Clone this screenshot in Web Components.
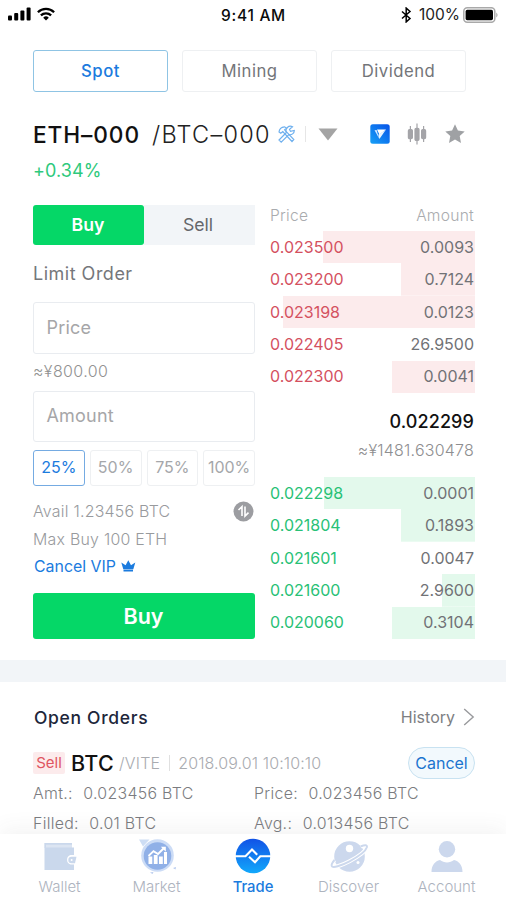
<!DOCTYPE html>
<html lang="en">
<head>
<meta charset="utf-8">
<meta name="viewport" content="width=device-width, initial-scale=1">
<title>Trade</title>
<style>
  html, body {
    margin: 0;
    height: 100%;
    overflow: hidden;
    background: #fff;
    font-family: Inter, "Liberation Sans", sans-serif;
  }
</style>
</head>
<body>
<trade-app></trade-app>

<script>
/**
 * Base class: renders styles() and template() into an open shadow root
 */
class BaseElement extends HTMLElement {
  constructor() {
    super();
    this.attachShadow({ mode: 'open' });
  }

  connectedCallback() {
    this.render();
  }

  render() {
    this.shadowRoot.innerHTML = `
      <style>
        * { box-sizing: border-box; }
        :host { display: block; box-sizing: border-box; white-space: nowrap; }
        svg { display: block; flex: none; }
        ${this.styles()}
      </style>
      ${this.template()}
    `;
  }

  styles() { return ''; }
  template() { return '<slot></slot>'; }
}

class StatusBar extends BaseElement {
  styles() {
    return `
      :host {
        display: grid;
        grid-template-columns: 1fr auto 1fr;
        align-items: center;
        height: 30px;
        padding: 0 7px 0 8px;
        font-size: 15.5px;
        font-weight: 500;
        letter-spacing: 0.7px;
        color: #0b0b0b;
      }
      .left, .right { display: flex; align-items: center; }
      .left { gap: 6px; padding-bottom: 2px; }
      .right { justify-content: flex-end; padding-bottom: 1px; }
      .level { font-weight: 400; margin: 0 3px 0 7px; color: #222; letter-spacing: 0; }
    `;
  }

  template() {
    return `
      <div class="left">
        <svg width="23" height="14" viewBox="0 0 23 14">
          <rect x="0" y="8.5" width="4" height="5" rx="1"/>
          <rect x="6.2" y="6" width="4" height="7.5" rx="1"/>
          <rect x="12.4" y="3.5" width="4" height="10" rx="1"/>
          <rect x="18.6" y="0.5" width="4" height="13" rx="1"/>
        </svg>
        <svg width="18" height="14" viewBox="0 0 18 14" fill="none" stroke="#000" stroke-width="2.3">
          <path d="M0.9 5.2a11.6 11.6 0 0 1 16.2 0M3.9 8.4a7.3 7.3 0 0 1 10.2 0"/>
          <path d="M9 13.6l-2.8-2.9a4 4 0 0 1 5.6 0z" fill="#000" stroke="none"/>
        </svg>
      </div>
      <span>9:41 AM</span>
      <div class="right">
        <svg width="11" height="16" viewBox="0 0 11 16" fill="none" stroke="#000" stroke-width="1.5">
          <path d="M1 4.5l8 7-3.8 3.4V1.1L9 4.5l-8 7"/>
        </svg>
        <span class="level">100%</span>
        <svg width="36" height="16" viewBox="0 0 36 16">
          <rect x="0.8" y="0.8" width="31" height="14.4" rx="3.5" fill="#fff" stroke="#a9a9a9" stroke-width="1.5"/>
          <rect x="2.6" y="2.8" width="27.4" height="10.4" rx="1.6"/>
          <path d="M33.4 5.5q2.2 2.5 0 5z" fill="#999"/>
        </svg>
      </div>
    `;
  }
}

/** Outlined choice box, add the active attribute for the blue state */
class OptionBox extends BaseElement {
  styles() {
    return `
      :host {
        display: flex;
        align-items: center;
        justify-content: center;
        border: 1.5px solid #eef0f2;
        border-radius: 3px;
        color: var(--option-color, #737579);
      }
      :host([active]) {
        border-color: var(--option-border, #8fc4e4);
        color: #1b7bde;
        font-weight: var(--option-weight, 500);
      }
    `;
  }
}

class ModeTabs extends BaseElement {
  styles() {
    return `
      :host {
        display: grid;
        grid-template-columns: repeat(3, 135px);
        gap: 14px;
        height: 42px;
        margin: 20px 33px 0;
        font-size: 16.7px;
        letter-spacing: 0.5px;
      }
    `;
  }

  template() {
    return `
      <option-box active>Spot</option-box>
      <option-box>Mining</option-box>
      <option-box>Dividend</option-box>
    `;
  }
}

class PairHeader extends BaseElement {
  styles() {
    return `
      :host { padding: 27px 40px 0 33px; }
      .row { display: flex; align-items: center; height: 30px; }
      .base { font-size: 22.7px; font-weight: 500; color: #111; letter-spacing: 0.9px; width: 119px; }
      .quote { font-size: 23.5px; font-weight: 300; color: #222; letter-spacing: 1.25px; width: 125px; }
      .sep { width: 1px; height: 16px; background: #e6e6e6; margin: 0 12px 0 9px; }
      .actions { display: flex; align-items: center; gap: 17px; margin-left: auto; }
      .change { height: 24px; line-height: 24px; margin-top: 10px; font-size: 18px; color: #2ec97c; letter-spacing: 0.1px; }
    `;
  }

  template() {
    return `
      <div class="row">
        <span class="base">ETH–000</span>
        <span class="quote">/BTC–000</span>
        <svg width="19" height="19" viewBox="0 0 19 19" fill="none" stroke="#6fb0ee" stroke-width="1.2">
          <path d="M2 7Q2.500 2.200 7.500 1.800L9.500 3 7.600 4.800 16.800 14.500 15 16.500 5.800 6.600 3.800 8.300z"/>
          <path d="M15.500 1.800l-3 2.600 1 2 3.800-1A4.300 4.300 0 0 1 11.800 9.600L4.200 17.200 2 15 9.400 7.500A4.400 4.400 0 0 1 15.500 1.800z"/>
        </svg>
        <span class="sep"></span>
        <svg width="20" height="13" viewBox="0 0 20 13"><path d="M0.5 0.5h19L10 12.5z" fill="#a4a4a4"/></svg>
        <div class="actions">
          <svg width="20" height="20" viewBox="0 0 20 20">
            <defs>
              <linearGradient id="badge" x1="1" y1="0" x2="0" y2="1">
                <stop offset="0" stop-color="#0753e8"/>
                <stop offset="1" stop-color="#16a0f6"/>
              </linearGradient>
            </defs>
            <rect x="0.3" y="0.3" width="19.4" height="19.4" rx="2.5" fill="url(#badge)"/>
            <path d="M7 5.600H16L9.400 10.400z" fill="#fff"/>
            <path d="M16 5.600L9.400 15 8.300 10.800z" fill="#eaf4ff"/>
            <path d="M4.500 6.300L6.600 5.900 9.400 15z" fill="#d4eaff"/>
          </svg>
          <svg width="20" height="22" viewBox="0 0 20 22" fill="#a4a4a8" stroke="#a4a4a8" stroke-width="1.2">
            <path d="M3.4 3v16M10 0.5v21M16.6 3v16" fill="none"/>
            <rect x="1.4" y="6.6" width="4" height="9" rx="1.2"/>
            <rect x="8" y="5.4" width="4" height="12" rx="1.2"/>
            <rect x="14.6" y="6.6" width="4" height="9" rx="1.2"/>
          </svg>
          <svg width="22" height="22" viewBox="0 0 22 22"><path d="M11 1.3l2.9 6.3 6.8.8-5 4.7 1.3 6.9-6-3.4-6 3.4 1.3-6.9-5-4.7 6.8-.8z" fill="#9fa1a4"/></svg>
        </div>
      </div>
      <div class="change">+0.34%</div>
    `;
  }
}

class InputBox extends BaseElement {
  styles() {
    return `
      :host {
        display: flex;
        align-items: center;
        padding: 0 0 2px 12.5px;
        border: 1.5px solid #e9ecf0;
        border-radius: 3px;
        font-size: 18px;
        color: #a6a6a8;
        letter-spacing: 0.2px;
      }
    `;
  }
}

class TradeForm extends BaseElement {
  styles() {
    return `
      :host { width: 222px; }
      .sides { display: grid; grid-template-columns: 1fr 1fr; height: 40px; font-size: 17.7px; line-height: 40px; text-align: center; }
      .buy { background: #05d767; color: #fff; font-weight: 600; border-radius: 3px; padding-right: 1px; }
      .sell { background: #f2f5f8; color: #65676b; padding-right: 3px; }
      .type { height: 57px; line-height: 57px; font-size: 18px; color: #75777b; letter-spacing: 0.5px; }
      .price { height: 52px; }
      .approx { height: 37px; line-height: 35px; font-size: 16px; font-weight: 300; color: #929292; letter-spacing: 0.4px; }
      .amount { height: 51px; }
      .percents {
        display: grid;
        grid-template-columns: repeat(4, 1fr);
        gap: 5px;
        height: 36px;
        margin: 8px 0 12px;
        font-size: 16px;
        --option-color: #a5a7aa;
        --option-border: #75abe2;
        --option-weight: 400;
      }
      .percents option-box { padding-bottom: 2px; }
      .line { display: flex; align-items: center; justify-content: space-between; height: 27.4px; font-size: 15.9px; color: #989a9d; font-weight: 300; letter-spacing: 0.25px; }
      .line svg { margin-right: 1px; }
      .vip { justify-content: flex-start; gap: 5px; padding-left: 1px; color: #1b7bde; font-weight: 400; letter-spacing: 0; }
      .submit { height: 46px; line-height: 46px; margin-top: 12.4px; text-align: center; font-size: 21.5px; font-weight: 600; color: #fff; background: #05d767; border-radius: 3px; padding-right: 1px; }
    `;
  }

  template() {
    return `
      <div class="sides"><div class="buy">Buy</div><div class="sell">Sell</div></div>
      <div class="type">Limit Order</div>
      <input-box class="price">Price</input-box>
      <div class="approx">≈¥800.00</div>
      <input-box class="amount">Amount</input-box>
      <div class="percents">
        <option-box active>25%</option-box>
        <option-box>50%</option-box>
        <option-box>75%</option-box>
        <option-box>100%</option-box>
      </div>
      <div class="line">
        <span>Avail 1.23456 BTC</span>
        <svg width="21" height="21" viewBox="0 0 21 21">
          <circle cx="10.5" cy="10.5" r="10" fill="#9c9da1"/>
          <path d="M5.5 9L9 5.6V15M12 5.6V15l3.5-3.4" fill="none" stroke="#fff" stroke-width="1.6"/>
        </svg>
      </div>
      <div class="line"><span>Max Buy 100 ETH</span></div>
      <div class="line vip">
        <span>Cancel VIP</span>
        <svg width="15" height="13" viewBox="0 0 15 13"><path d="M0.300 2.500l4.300 2.700L7.300 0.200l2.700 5 4.300-2.700-2 6.800H2.300zM2.500 9.700h9.500v1.800H2.500z" fill="#1b7bde"/></svg>
      </div>
      <div class="submit">Buy</div>
    `;
  }
}

/** One order book level. The depth attribute is the bar width in pixels */
class BookRow extends BaseElement {
  styles() {
    const depth = this.getAttribute('depth') || 0;
    const ask = this.getAttribute('side') === 'ask';
    return `
      :host {
        display: flex;
        justify-content: space-between;
        align-items: center;
        height: 32.4px;
        padding: 0 1px 0.6px 0;
        font-size: 16px;
        background: linear-gradient(${ask ? '#fcebec' : '#e3f9ec'} 0 0) right / ${depth}px 100% no-repeat;
      }
      .price { color: ${ask ? '#d4515f' : '#28c176'}; }
      .amount { color: #717276; }
    `;
  }

  template() {
    return `
      <span class="price">${this.getAttribute('price')}</span>
      <span class="amount">${this.getAttribute('amount')}</span>
    `;
  }
}

class OrderBook extends BaseElement {
  constructor() {
    super();
    this.asks = [
      ['0.023500', '0.0093', 152],
      ['0.023200', '0.7124', 74],
      ['0.023198', '0.0123', 192],
      ['0.022405', '26.9500', 0],
      ['0.022300', '0.0041', 83],
    ];
    this.bids = [
      ['0.022298', '0.0001', 151],
      ['0.021804', '0.1893', 74],
      ['0.021601', '0.0047', 0],
      ['0.021600', '2.9600', 33],
      ['0.020060', '0.3104', 83],
    ];
  }

  styles() {
    return `
      :host { width: 205px; }
      .head { display: flex; justify-content: space-between; height: 26px; line-height: 21px; padding-right: 1px; font-size: 15.6px; font-weight: 300; color: #a9abae; letter-spacing: 0.25px; }
      .last { height: 28px; line-height: 28px; margin-top: 15px; padding-right: 1px; text-align: right; font-size: 18px; font-weight: 500; color: #111; letter-spacing: 0.1px; }
      .fiat { height: 28px; line-height: 28px; margin-bottom: 13px; padding-right: 1px; text-align: right; font-size: 16px; font-weight: 300; color: #8e8e90; letter-spacing: 0.22px; }
    `;
  }

  rows(levels, side) {
    return levels.map(([price, amount, depth]) => `
      <book-row side="${side}" price="${price}" amount="${amount}" depth="${depth}"></book-row>
    `).join('');
  }

  template() {
    return `
      <div class="head"><span>Price</span><span>Amount</span></div>
      ${this.rows(this.asks, 'ask')}
      <div class="last">0.022299</div>
      <div class="fiat">≈¥1481.630478</div>
      ${this.rows(this.bids, 'bid')}
    `;
  }
}

class OpenOrders extends BaseElement {
  styles() {
    return `
      :host { padding: 0 31px 0 33px; border-top: 22px solid #f2f5f8; }
      .head { display: flex; align-items: center; height: 70px; justify-content: space-between; }
      .title { padding-left: 1px; font-size: 17.5px; font-weight: 500; color: #20263a; letter-spacing: 0.68px; }
      .history { display: flex; align-items: center; gap: 8px; font-size: 16px; color: #7d7e82; }
      .order { display: flex; align-items: center; height: 32px; margin-top: -5px; }
      .side { width: 32px; height: 22px; line-height: 22px; text-align: center; font-size: 15px; color: #df5561; background: #fcebec; border-radius: 2px; }
      .coin { font-size: 21.5px; font-weight: 500; color: #111; margin-left: 6px; width: 48px; letter-spacing: 0.3px; }
      .market { font-size: 16px; font-weight: 300; color: #a9abb0; letter-spacing: 0.2px; }
      .sep { width: 1px; height: 16px; background: #e0e0e0; margin: 0 8px 0 9px; }
      .time { font-size: 16px; font-weight: 300; color: #a9abb0; letter-spacing: 0.1px; }
      .cancel { margin-left: auto; width: 67px; height: 32px; line-height: 30px; text-align: center; font-size: 16px; color: #1b74cf; background: #f2f9fd; border: 1px solid #c8e2f1; border-radius: 16px; }
      .details { display: grid; grid-template-columns: 221px auto; grid-auto-rows: 29.7px; align-items: center; font-size: 15.9px; font-weight: 300; color: #7b7c80; letter-spacing: 0.3px; }
      .details div { display: flex; gap: 10.5px; }
    `;
  }

  template() {
    return `
      <div class="head">
        <span class="title">Open Orders</span>
        <div class="history">
          <span>History</span>
          <svg width="12" height="18" viewBox="0 0 12 18"><path d="M1.2 1l9 8-9 8" fill="none" stroke="#98999c" stroke-width="1.4"/></svg>
        </div>
      </div>
      <div class="order">
        <span class="side">Sell</span>
        <span class="coin">BTC</span>
        <span class="market">/VITE</span>
        <span class="sep"></span>
        <span class="time">2018.09.01 10:10:10</span>
        <span class="cancel">Cancel</span>
      </div>
      <div class="details">
        <div><span>Amt.:</span><span>0.023456 BTC</span></div>
        <div><span>Price:</span><span>0.023456 BTC</span></div>
        <div><span>Filled:</span><span>0.01 BTC</span></div>
        <div><span>Avg.:</span><span>0.013456 BTC</span></div>
      </div>
    `;
  }
}

/** Tab bar item: icon in the default slot, caption from the label attribute */
class TabItem extends BaseElement {
  styles() {
    return `
      :host {
        display: flex;
        flex-direction: column;
        align-items: center;
        gap: 3px;
        font-size: 15px;
        font-weight: 300;
        line-height: 20px;
        color: #adb3be;
      }
      :host([active]) { color: #1b7bde; font-weight: 500; font-size: 14.8px; }
    `;
  }

  template() {
    return `<slot></slot><span>${this.getAttribute('label')}</span>`;
  }
}

class TabBar extends BaseElement {
  styles() {
    return `
      :host {
        display: grid;
        grid-template-columns: 97px 97px 96px 95px 101px;
        justify-content: start;
        height: 66px;
        padding: 4px 0 0 11px;
        background: #fff;
        box-shadow: 0 -6px 20px rgba(60, 60, 60, 0.06);
      }
    `;
  }

  template() {
    return `
      <tab-item label="Wallet">
        <svg width="36" height="36" viewBox="0 0 36 36">
          <path d="M2.500 5h27.500v5H2.500z" fill="#dce5f2"/>
          <path d="M2.500 9.500H32V17h-3.500a5 5 0 0 0 0 9.500H32V32H2.500z" fill="#cad8ec"/>
          <path d="M2.500 5H30v1.800H4v3H2.500z" fill="#cad8ec"/>
          <path d="M34.500 18.800h-5a3.200 3.200 0 0 0 0 6.400h3.500z" fill="#cad8ec"/>
          <circle cx="29.600" cy="22" r="1" fill="#fff"/>
        </svg>
      </tab-item>
      <tab-item label="Market">
        <svg width="40" height="36" viewBox="0 0 40 36">
          <path d="M2 1.5l10.5 0L6 8.5z" fill="#cdddf4"/>
          <circle cx="20.5" cy="17.5" r="16.3" fill="#ccdcf6"/>
          <circle cx="20.5" cy="18" r="13.8" fill="#90b0e7"/>
          <path d="M11.5 26v-7.5h3.8V26zM16.8 26v-9h3.8v9zM22 26v-7.5h3.8V26zM27 26V14h3v12z" fill="#fff"/>
          <path d="M11.5 18l5-4.8 4.5 2.8 6-6" fill="none" stroke="#fff" stroke-width="1.8"/>
          <path d="M23.8 8.8h5v5z" fill="#fff"/>
          <path d="M36 30l3-1-.5 2.5zM13 34.5l3.5-.5-1 2z" fill="#b6caee"/>
        </svg>
      </tab-item>
      <tab-item label="Trade" active>
        <svg width="36" height="36" viewBox="0 0 36 36">
          <defs>
            <linearGradient id="disc" x1="0" y1="0" x2="0" y2="1">
              <stop offset="0" stop-color="#1152e6"/>
              <stop offset="1" stop-color="#12a8fb"/>
            </linearGradient>
          </defs>
          <circle cx="18" cy="18" r="17.3" fill="url(#disc)"/>
          <path d="M0 18.300h10.500L17 11.500l5.200 5.200M14 18.800l6 5.400 5.300-5.900H36" fill="none" stroke="#fff" stroke-width="2.100"/>
        </svg>
      </tab-item>
      <tab-item label="Discover">
        <svg width="40" height="36" viewBox="0 0 40 36">
          <circle cx="20.500" cy="18.500" r="15.300" fill="#ccd8ed"/>
          <circle cx="20.500" cy="10.500" r="3.700" fill="#fff"/>
          <circle cx="29" cy="24.500" r="1.500" fill="#fff"/>
          <path d="M31.500 8.500c5-2 7-1.500 6.400.8C36.800 13 29 18.800 20.500 23.300S3.500 30.500 2.700 28C2.200 26.500 3.300 24.500 5.500 22" fill="none" stroke="#fff" stroke-width="4"/>
          <path d="M31.500 8.500c5-2 7-1.500 6.400.8C36.800 13 29 18.800 20.500 23.300S3.500 30.500 2.700 28C2.200 26.500 3.300 24.500 5.500 22" fill="none" stroke="#ccd8ed" stroke-width="1.900"/>
        </svg>
      </tab-item>
      <tab-item label="Account">
        <svg width="36" height="36" viewBox="0 0 36 36" fill="#ccd8ed">
          <circle cx="18" cy="11.300" r="8.200"/>
          <path d="M2.500 34c0-7 3.800-11 8.500-12 4 3.300 10 3.300 14 0 4.700 1 8.500 5 8.500 12z"/>
        </svg>
      </tab-item>
    `;
  }
}

class TradeApp extends BaseElement {
  styles() {
    return `
      :host { display: flex; flex-direction: column; height: 900px; width: 506px; overflow: hidden; background: #fff; }
      .market { display: flex; gap: 15px; height: 455px; margin: 22px 31px 0 33px; }
      open-orders { flex: 1; min-height: 0; }
      tab-bar { flex: none; }
    `;
  }

  template() {
    return `
      <status-bar></status-bar>
      <mode-tabs></mode-tabs>
      <pair-header></pair-header>
      <div class="market">
        <trade-form></trade-form>
        <order-book></order-book>
      </div>
      <open-orders></open-orders>
      <tab-bar></tab-bar>
    `;
  }
}

customElements.define('status-bar', StatusBar);
customElements.define('option-box', OptionBox);
customElements.define('mode-tabs', ModeTabs);
customElements.define('pair-header', PairHeader);
customElements.define('input-box', InputBox);
customElements.define('trade-form', TradeForm);
customElements.define('book-row', BookRow);
customElements.define('order-book', OrderBook);
customElements.define('open-orders', OpenOrders);
customElements.define('tab-item', TabItem);
customElements.define('tab-bar', TabBar);
customElements.define('trade-app', TradeApp);
</script>
</body>
</html>
